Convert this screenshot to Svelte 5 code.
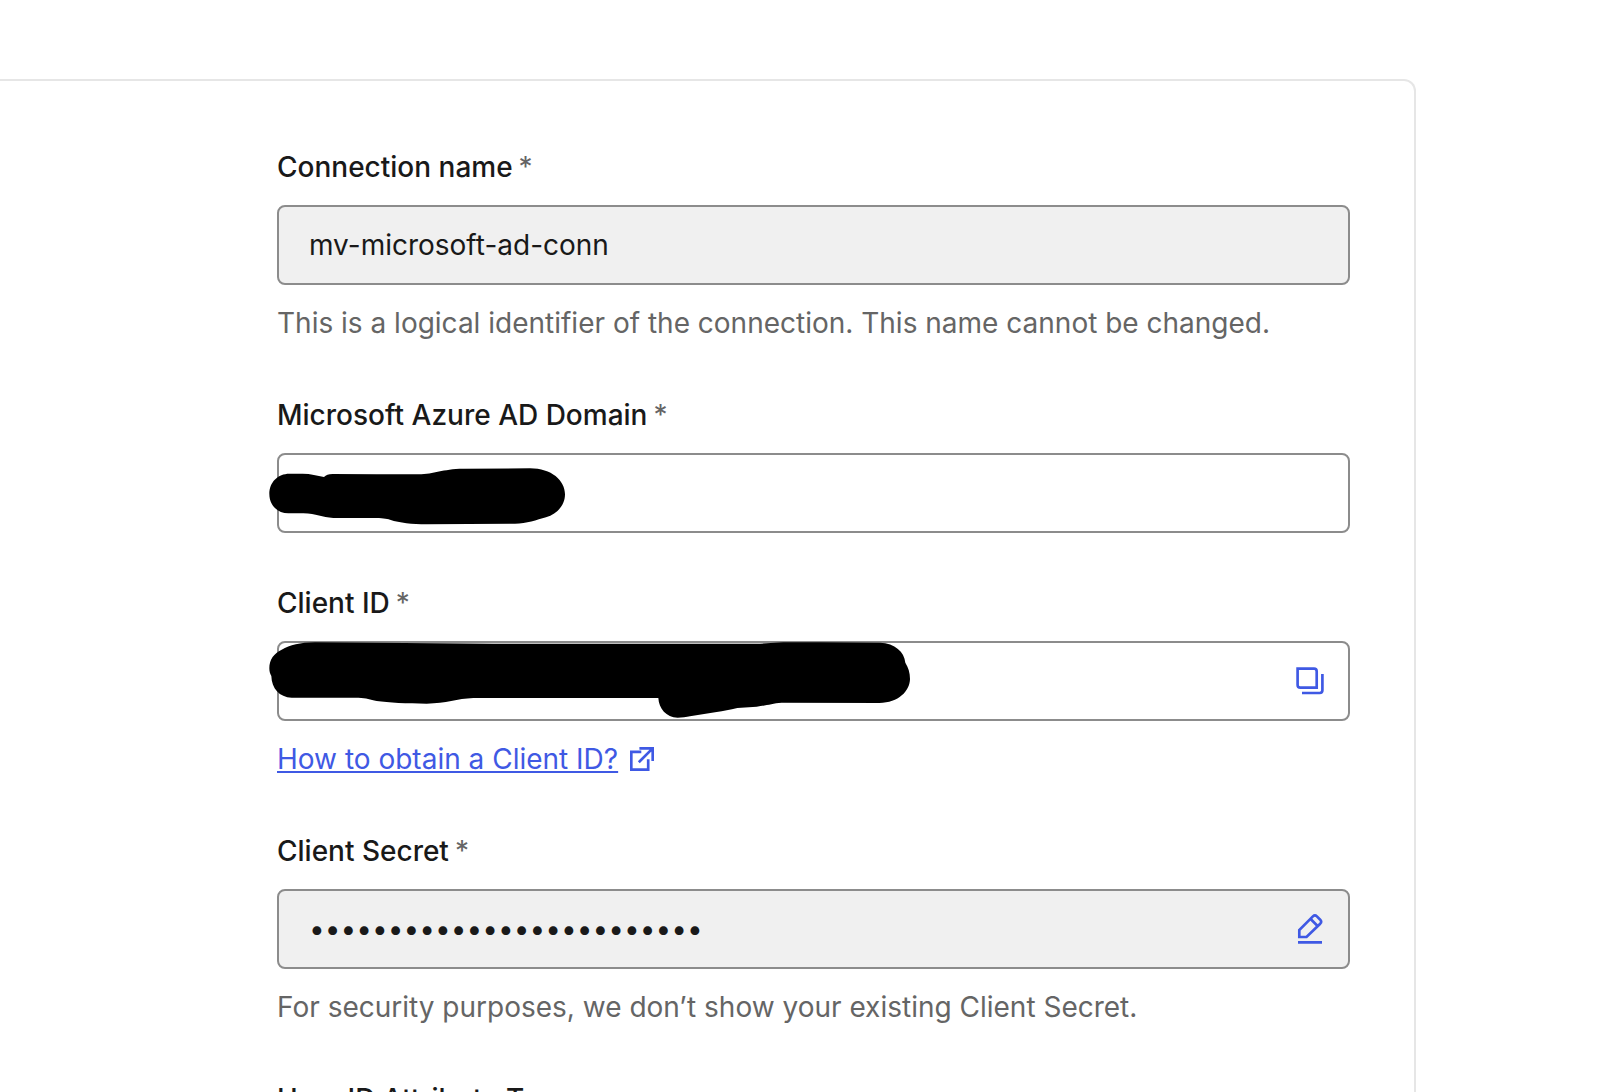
<script>
  let name = $state('mv-microsoft-ad-conn');
  let domain = $state('');
  let clientId = $state('');
  let secret = $state('x'.repeat(25));
  let attribute = $state('');
</script>

<main class="page">
  <form class="card">
    <div class="field">
      <label for="name">Connection name<span class="required">*</span></label>
      <div class="control readonly">
        <input id="name" type="text" readonly bind:value={name} />
      </div>
      <p class="hint">This is a logical identifier of the connection. This name cannot be changed.</p>
    </div>

    <div class="field">
      <label for="domain">Microsoft Azure AD Domain<span class="required">*</span></label>
      <div class="control">
        <input id="domain" type="text" bind:value={domain} />
        <svg class="redaction" width="300" height="80" viewBox="21 189 900 240" aria-hidden="true">
          <path d="M28 312C28 276 54 251 88 251H128C152 251 172 257 192 261C198 256 205 252 218 252L350 253H475C525 252 545 237 610 236L810 235C875 235 915 272 915 313C915 345 893 371 858 382C830 390 800 401 765 401L500 403C455 402 420 399 390 389C380 386 365 384 340 384L220 384C185 382 170 371 130 370H85C52 370 28 345 28 312Z" />
        </svg>
      </div>
    </div>

    <div class="field">
      <label for="client-id">Client ID<span class="required">*</span></label>
      <div class="control">
        <input id="client-id" type="text" bind:value={clientId} />
        <button type="button" aria-label="Copy Client ID">
          <svg width="32" height="32" viewBox="0 0 32 32" aria-hidden="true">
            <path d="M3.6 3.7H20Q22.7 3.7 22.7 6.4V22.6H6.3Q3.6 22.6 3.6 19.9Z" />
            <path d="M28.4 9V25.3Q28.4 28 25.7 28H8" />
          </svg>
        </button>
        <svg class="redaction" width="645" height="80" viewBox="21 183 1935 240" aria-hidden="true">
          <path d="M28 265C28 238 42 220 65 209C90 196 120 187 165 187L700 191H1500L1570 187H1680L1860 188C1905 190 1933 215 1936 248C1945 262 1950 278 1950 297C1949 333 1916 368 1858 369L1565 368C1535 370 1520 377 1490 380L1432 384C1410 389 1390 394 1370 396L1290 409C1280 411 1265 413 1253 413C1218 412 1197 386 1195 354H640C590 356 560 370 500 371C440 371 385 368 350 363C330 359 320 354 295 353H95C58 352 35 325 34 288C30 282 28 275 28 265Z" />
        </svg>
      </div>
      <p class="hint">
        <a href="#client-id-help">
          <span>How to obtain a Client ID?</span>
          <svg width="24" height="24" viewBox="0 0 24 24" aria-hidden="true">
            <path d="M11.3 4.9H1.3V22.6H18.2V12.3M9.4 1.3H22.7V14M22.4 1.6L8.8 15.2" />
          </svg>
        </a>
      </p>
    </div>

    <div class="field">
      <label for="secret">Client Secret<span class="required">*</span></label>
      <div class="control readonly">
        <input id="secret" type="password" readonly bind:value={secret} />
        <button type="button" aria-label="Edit Client Secret">
          <svg width="32" height="32" viewBox="0 0 32 32" aria-hidden="true">
            <path d="M5.3 24V17L18.9 3.4Q20.9 1.5 22.9 3.4L26.2 6.7Q28.1 8.7 26.2 10.7L12.5 24Z" />
            <path d="M16.4 5.8L23.6 13M4 29.3H28" />
          </svg>
        </button>
      </div>
      <p class="hint">For security purposes, we don’t show your existing Client Secret.</p>
    </div>

    <div class="field">
      <label for="attribute">User ID Attribute Type</label>
      <div class="control">
        <input id="attribute" type="text" bind:value={attribute} />
      </div>
    </div>
  </form>
</main>

<style>
  :global(body) {
    background: #fff;
  }

  .page {
    box-sizing: border-box;
    height: 100vh;
    overflow: hidden;
    padding: 79px 194px 0 0;
    color: #191919;
    font: 400 28px/44px Inter, 'Liberation Sans', sans-serif;
  }

  .card {
    display: flex;
    flex-direction: column;
    gap: 48px;
    padding: 64px 64px 64px 277px;
    border: 2px solid #e6e6e6;
    border-left: 0;
    border-radius: 0 12px 12px 0;
  }

  .field {
    display: flex;
    flex-direction: column;
    gap: 16px;
  }

  label {
    font-weight: 500;
  }

  .required {
    margin-left: 6px;
    color: #656565;
    font-weight: 400;
  }

  .control {
    position: relative;
    display: flex;
    align-items: center;
    box-sizing: border-box;
    height: 80px;
    padding: 0 22px 0 30px;
    border: 2px solid #8c8c8c;
    border-radius: 8px;
    background: #fff;
  }

  .readonly {
    background: #f0f0f0;
  }

  input {
    flex: 1;
    min-width: 0;
    padding: 0;
    border: 0;
    outline: 0;
    background: transparent;
    color: inherit;
    font: inherit;
  }

  button {
    display: flex;
    padding: 0;
    border: 0;
    background: none;
    color: #3f59e4;
    cursor: pointer;
  }

  svg {
    flex: none;
    fill: none;
    stroke: currentColor;
    stroke-width: 2.67;
  }

  .redaction {
    position: absolute;
    top: -2px;
    left: -12px;
    fill: #000;
    stroke: none;
    pointer-events: none;
  }

  .hint {
    margin: 0;
    color: #656565;
  }

  a {
    display: inline-flex;
    align-items: center;
    gap: 12px;
    color: #3f59e4;
    text-decoration: none;
  }

  a span {
    text-decoration: underline;
    text-decoration-thickness: 2px;
    text-underline-offset: 2px;
  }
</style>
